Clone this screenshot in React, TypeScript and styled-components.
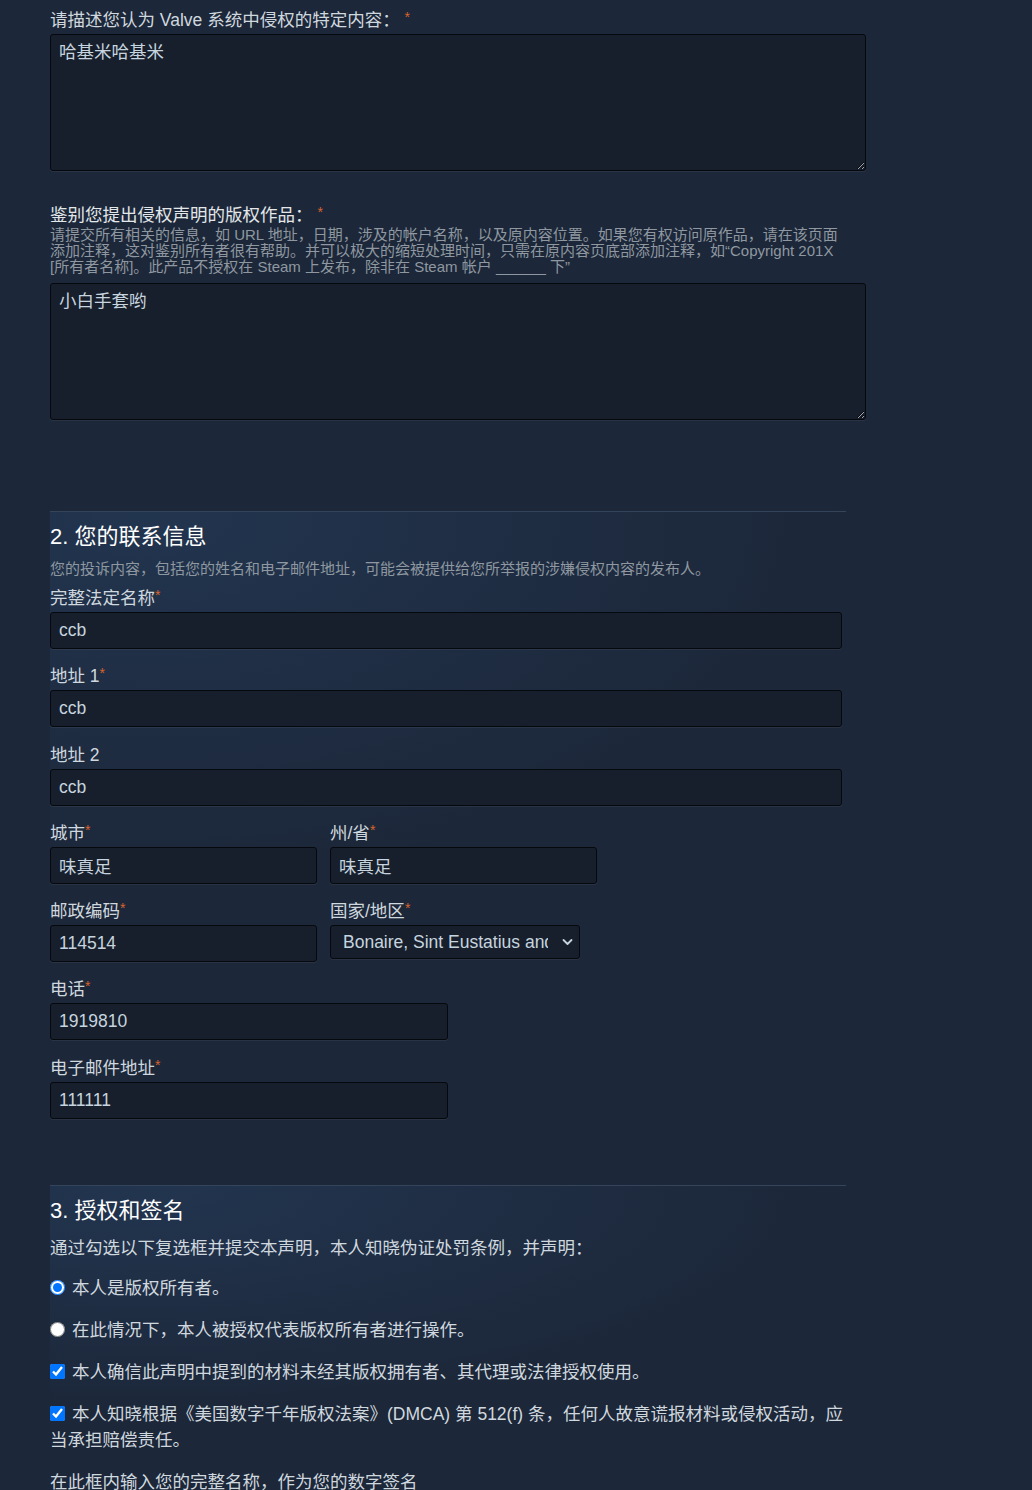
import React from "react";
import styled, { createGlobalStyle } from "styled-components";

const Global = createGlobalStyle`
  html, body { margin: 0; padding: 0; background: #1c2739; }
  body {
    font-family: "Liberation Sans", Arial, "Noto Sans CJK SC", sans-serif;
    color: #c6d4df;
  }
  * { box-sizing: border-box; }
`;

const Page = styled.div`
  width: 846px;
  padding: 8px 0 40px 50px;
`;

const TopSection = styled.section`
  padding-bottom: 91px;
`;

const Label = styled.div<{ $mb?: number; $mt?: number; $bright?: boolean }>`
  font-size: 17.5px;
  line-height: 24px;
  height: 24px;
  color: ${(p) => (p.$bright ? "#e3e7ea" : "#d0d8df")};
  margin-top: ${(p) => p.$mt ?? 0}px;
  margin-bottom: ${(p) => p.$mb ?? 2}px;
  white-space: nowrap;
`;

const Req = styled.span`
  color: #d9632c;
  font-size: 14px;
  line-height: 0;
  vertical-align: 4px;
`;

const Hint = styled.div`
  font-size: 15px;
  line-height: 16px;
  color: #8f98a0;
  margin-bottom: 8px;
`;

const TextArea = styled.textarea`
  display: block;
  width: 816px;
  height: 137px;
  margin: 0;
  padding: 5px 8px;
  background: #171f2c;
  border: 1px solid #05080c;
  border-radius: 3px;
  box-shadow: 0 1px 0 rgba(255, 255, 255, 0.06);
  color: #c6d4df;
  font-family: inherit;
  font-size: 17.5px;
  line-height: 24px;
  outline: none;
`;

const Section = styled.section`
  border-top: 1px solid #34445a;
  padding: 10px 0 51px;
  background:
    radial-gradient(ellipse 85% 55% at 12% 0%, rgba(38, 62, 94, 0.6) 0%, rgba(38, 62, 94, 0) 100%);
`;

const SectionTitle = styled.h2`
  margin: 0;
  font-size: 22px;
  line-height: 30px;
  height: 30px;
  font-weight: normal;
  color: #ffffff;
`;

const SectionHint = styled.div`
  margin: 7px 0 7px;
  font-size: 15px;
  line-height: 20px;
  color: #8f98a0;
`;

const Field = styled.div<{ $w?: number }>`
  width: ${(p) => (p.$w ? `${p.$w}px` : "100%")};
  margin-bottom: 15.3px;
`;

const Input = styled.input<{ $w?: number }>`
  display: block;
  width: ${(p) => (p.$w ? `${p.$w}px` : "792px")};
  height: 37px;
  margin: 0;
  padding: 0 8px;
  background: #171f2c;
  border: 1px solid #05080c;
  border-radius: 3px;
  box-shadow: 0 1px 0 rgba(255, 255, 255, 0.06);
  color: #c6d4df;
  font-family: inherit;
  font-size: 17.5px;
  outline: none;
`;

const Row = styled.div`
  display: grid;
  grid-template-columns: 267px 267px;
  column-gap: 13px;
  align-items: start;
`;

const SelectWrap = styled.div`
  position: relative;
  width: 250px;
`;

const Select = styled.select`
  display: block;
  width: 250px;
  height: 34px;
  margin: 0;
  padding: 0 31px 0 12px;
  appearance: none;
  -webkit-appearance: none;
  background: #171f2c;
  border: 1px solid #05080c;
  border-radius: 3px;
  box-shadow: 0 1px 0 rgba(255, 255, 255, 0.06);
  color: #c6d4df;
  font-family: inherit;
  font-size: 17.5px;
  outline: none;
  text-overflow: clip;
`;

const Chevron = styled.svg`
  position: absolute;
  right: 7px;
  top: 13px;
  width: 11px;
  height: 8px;
  pointer-events: none;
`;

const Intro = styled.div`
  margin-top: 9px;
  font-size: 17.5px;
  line-height: 26px;
  color: #d0d8df;
`;

const Options = styled.div`
  margin-top: 14px;
  display: flex;
  flex-direction: column;
  gap: 16px;
`;

const Option = styled.label`
  display: block;
  font-size: 17.5px;
  line-height: 26px;
  color: #d0d8df;
`;

const Check = styled.input`
  width: 15px;
  height: 15px;
  margin: 0 7px 0 0;
  vertical-align: -1px;
`;

const SignText = styled.div`
  margin-top: 16px;
  font-size: 17.5px;
  line-height: 26px;
  color: #d0d8df;
`;

export default function App() {
  return (
    <>
      <Global />
      <Page>
        <TopSection>
          <Label>
            请描述您认为 Valve 系统中侵权的特定内容： <Req>*</Req>
          </Label>
          <TextArea defaultValue="哈基米哈基米" />
          <Label $mt={32} $mb={0} $bright>
            鉴别您提出侵权声明的版权作品： <Req>*</Req>
          </Label>
          <Hint>
            请提交所有相关的信息，如 URL 地址，日期，涉及的帐户名称，以及原内容位置。如果您有权访问原作品，请在该页面添加注释，这对鉴别所有者很有帮助。并可以极大的缩短处理时间，只需在原内容页底部添加注释，如“Copyright 201X [所有者名称]。此产品不授权在 Steam 上发布，除非在 Steam 帐户 ______ 下”
          </Hint>
          <TextArea defaultValue="小白手套哟" />
        </TopSection>

        <Section>
          <SectionTitle>2. 您的联系信息</SectionTitle>
          <SectionHint>您的投诉内容，包括您的姓名和电子邮件地址，可能会被提供给您所举报的涉嫌侵权内容的发布人。</SectionHint>
          <Field>
            <Label>完整法定名称<Req>*</Req></Label>
            <Input defaultValue="ccb" />
          </Field>
          <Field>
            <Label>地址 1<Req>*</Req></Label>
            <Input defaultValue="ccb" />
          </Field>
          <Field>
            <Label>地址 2</Label>
            <Input defaultValue="ccb" />
          </Field>
          <Row>
            <Field>
              <Label>城市<Req>*</Req></Label>
              <Input $w={267} defaultValue="味真足" />
            </Field>
            <Field>
              <Label>州/省<Req>*</Req></Label>
              <Input $w={267} defaultValue="味真足" />
            </Field>
          </Row>
          <Row>
            <Field>
              <Label>邮政编码<Req>*</Req></Label>
              <Input $w={267} defaultValue="114514" />
            </Field>
            <Field>
              <Label>国家/地区<Req>*</Req></Label>
              <SelectWrap>
                <Select defaultValue="BQ">
                  <option value="BQ">Bonaire, Sint Eustatius and Saba</option>
                  <option value="CN">China</option>
                </Select>
                <Chevron viewBox="0 0 11 8">
                  <path d="M1.5 2 L5.5 6 L9.5 2" fill="none" stroke="#c6d4df" strokeWidth="1.8" strokeLinecap="round" strokeLinejoin="round" />
                </Chevron>
              </SelectWrap>
            </Field>
          </Row>
          <Field>
            <Label>电话<Req>*</Req></Label>
            <Input $w={398} defaultValue="1919810" />
          </Field>
          <Field>
            <Label>电子邮件地址<Req>*</Req></Label>
            <Input $w={398} defaultValue="111111" />
          </Field>
        </Section>

        <Section>
          <SectionTitle>3. 授权和签名</SectionTitle>
          <Intro>通过勾选以下复选框并提交本声明，本人知晓伪证处罚条例，并声明：</Intro>
          <Options>
            <Option>
              <Check type="radio" name="owner" defaultChecked />
              本人是版权所有者。
            </Option>
            <Option>
              <Check type="radio" name="owner" />
              在此情况下，本人被授权代表版权所有者进行操作。
            </Option>
            <Option>
              <Check type="checkbox" defaultChecked />
              本人确信此声明中提到的材料未经其版权拥有者、其代理或法律授权使用。
            </Option>
            <Option>
              <Check type="checkbox" defaultChecked />
              本人知晓根据《美国数字千年版权法案》(DMCA) 第 512(f) 条，任何人故意谎报材料或侵权活动，应当承担赔偿责任。
            </Option>
          </Options>
          <SignText>在此框内输入您的完整名称，作为您的数字签名</SignText>
          <Field>
            <Input $w={398} defaultValue="" />
          </Field>
        </Section>
      </Page>
    </>
  );
}
